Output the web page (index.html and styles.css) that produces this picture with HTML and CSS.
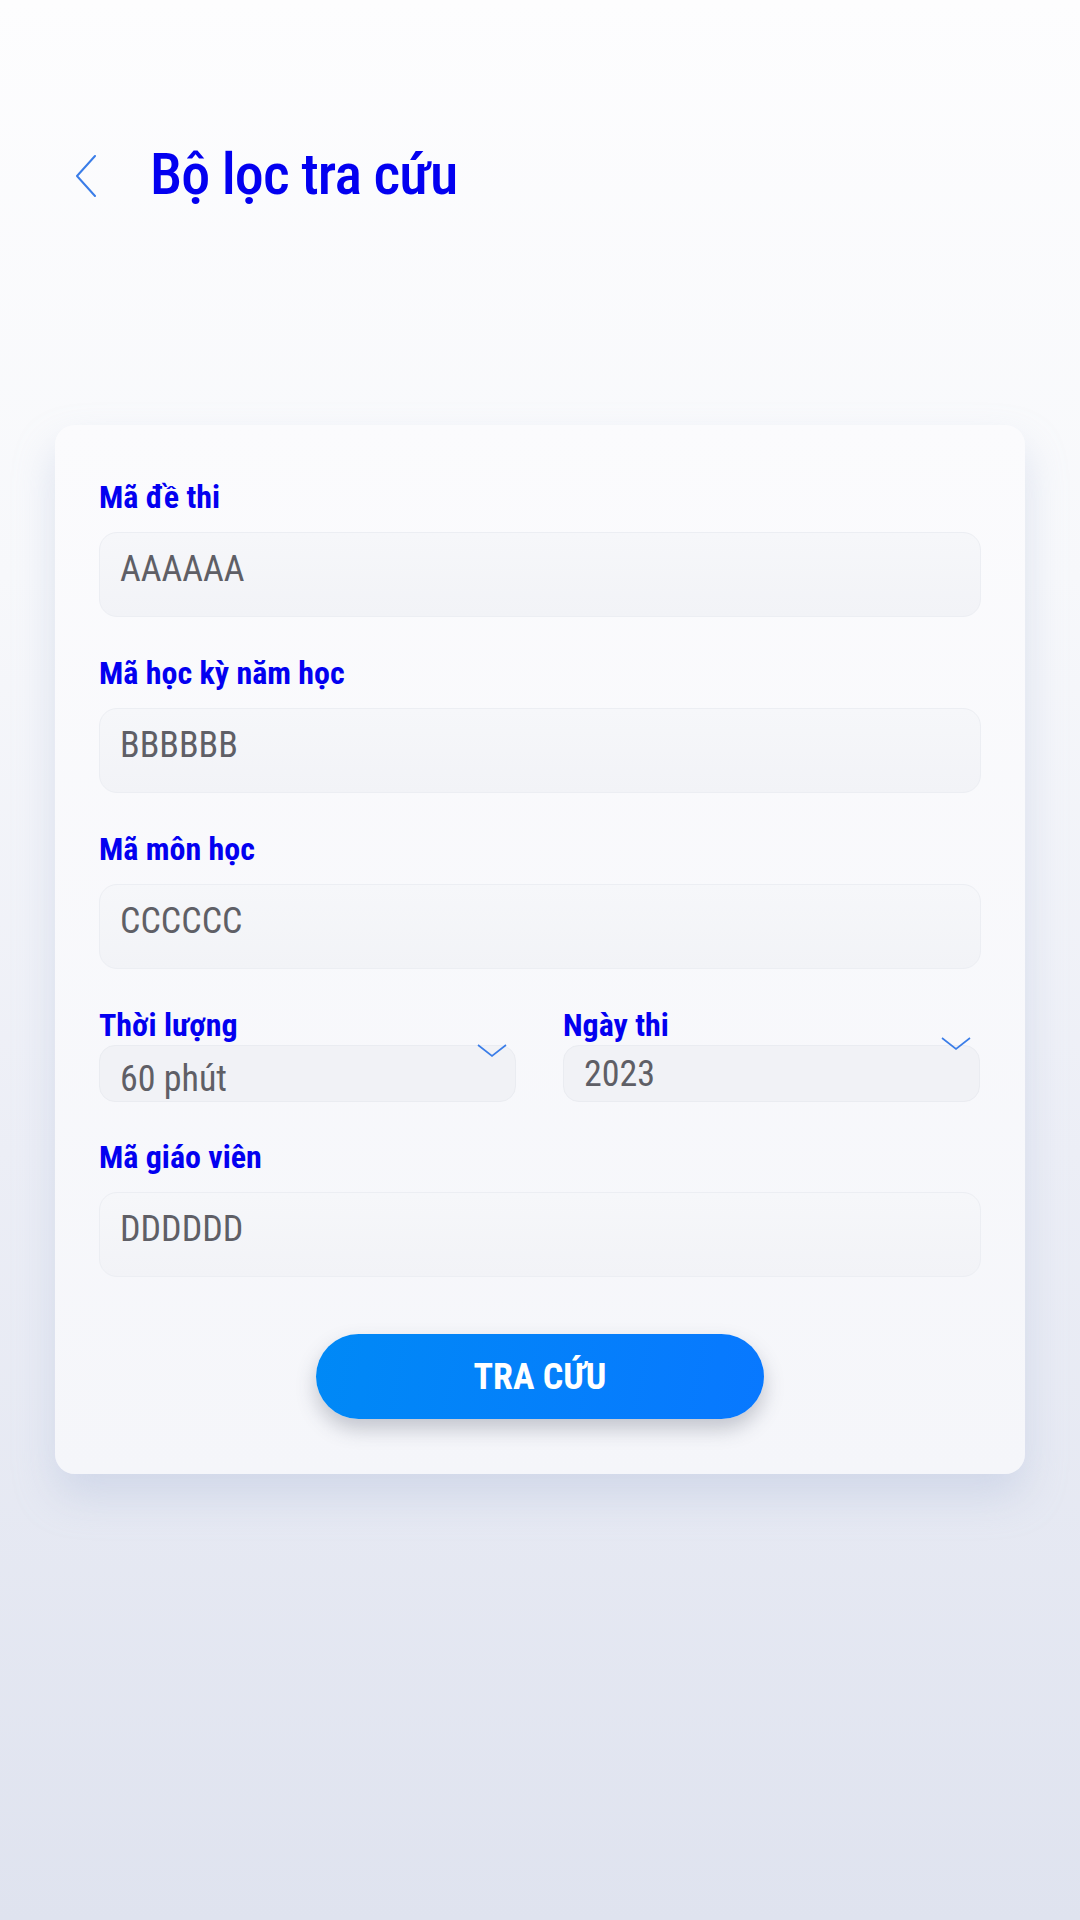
FILE: index.html
```html
<!DOCTYPE html>
<html lang="vi">
<head>
<meta charset="utf-8">
<title>Bộ lọc tra cứu</title>
<link rel="stylesheet" href="styles.css">
</head>
<body>
<div class="screen">
  <header class="header">
    <button class="back" aria-label="Quay lại">
      <svg width="22" height="42" viewBox="0 0 22 42"><path d="M20 1 L2 21 L20 41" fill="none" stroke="#3a7de8" stroke-width="2" stroke-linecap="round" stroke-linejoin="round"/></svg>
    </button>
    <h1 class="title"><span class="cond">Bộ lọc tra cứu</span></h1>
  </header>

  <main class="card">
    <div class="field">
      <label class="label"><span class="cond">Mã đề thi</span></label>
      <div class="input"><span class="cond">AAAAAA</span></div>
    </div>
    <div class="field">
      <label class="label"><span class="cond">Mã học kỳ năm học</span></label>
      <div class="input"><span class="cond">BBBBBB</span></div>
    </div>
    <div class="field">
      <label class="label"><span class="cond">Mã môn học</span></label>
      <div class="input"><span class="cond">CCCCCC</span></div>
    </div>
    <div class="row">
      <div class="col">
        <label class="label"><span class="cond">Thời lượng</span></label>
        <div class="select sel-left">
          <span class="cond">60 phút</span>
          <svg class="chev chev-left" width="30" height="13" viewBox="0 0 30 13"><path d="M1 1 L15 12 L29 1" fill="none" stroke="#3a7de8" stroke-width="1.6"/></svg>
        </div>
      </div>
      <div class="col">
        <label class="label"><span class="cond">Ngày thi</span></label>
        <div class="select sel-right">
          <span class="cond">2023</span>
          <svg class="chev chev-right" width="30" height="13" viewBox="0 0 30 13"><path d="M1 1 L15 12 L29 1" fill="none" stroke="#3a7de8" stroke-width="1.6"/></svg>
        </div>
      </div>
    </div>
    <div class="field last">
      <label class="label"><span class="cond">Mã giáo viên</span></label>
      <div class="input"><span class="cond">DDDDDD</span></div>
    </div>
    <div class="actions">
      <button class="btn"><span class="cond">TRA CỨU</span></button>
    </div>
  </main>
</div>
</body>
</html>
```

FILE: styles.css
```css
* { box-sizing: border-box; }
html, body { margin: 0; padding: 0; }
body {
  width: 1080px;
  height: 1920px;
  font-family: Roboto, "Noto Sans", sans-serif;
  background: linear-gradient(180deg, #fdfdfe 0%, #f7f8fb 30%, #eceef6 60%, #dfe3ef 100%);
  overflow: hidden;
}
.screen { width: 1080px; height: 1920px; }

.cond {
  display: inline-block;
  font-stretch: 75%;
}

.header {
  display: flex;
  padding: 139px 0 0 75px;
  height: 425px;
  align-items: flex-start;
}
.back {
  border: 0;
  background: none;
  padding: 0;
  margin: 16px 0 0 0;
  width: 22px;
  height: 42px;
  cursor: pointer;
}
.title {
  margin: 0 0 0 53px;
  font-size: 58px;
  line-height: 70px;
  font-weight: 500;
  letter-spacing: -0.9px;
  color: #0300f0;
}

.card {
  margin: 0 55px;
  width: 970px;
  height: 1049px;
  border-radius: 20px;
  background: linear-gradient(180deg, #fbfbfd 0%, #f5f6fa 100%);
  box-shadow: 0 22px 40px rgba(170, 182, 215, 0.35);
  padding: 52px 44px 0 44px;
}

.field { margin-bottom: 36px; }
.field.last { margin-bottom: 0; }

.label {
  display: block;
  font-size: 32px;
  line-height: 40px;
  font-weight: 700;
  color: #0300f0;
}

.input {
  margin-top: 15px;
  height: 85px;
  border-radius: 18px;
  background: linear-gradient(180deg, #f6f7fa 0%, #f2f3f7 100%);
  border: 1px solid #eceef3;
  padding: 12px 20px 0;
  font-size: 36px;
  line-height: 48px;
  color: #5f5f66;
}

.row {
  display: grid;
  grid-template-columns: 417px 417px;
  column-gap: 47px;
  margin-bottom: 35px;
}
.select {
  position: relative;
  height: 57px;
  border-radius: 16px;
  background: #f1f2f6;
  border: 1px solid #eaecf1;
  font-size: 36px;
  line-height: 48px;
  color: #5f5f66;
  padding-left: 20px;
}
.sel-left { padding-top: 9px; }
.sel-right { padding-top: 4px; }
.chev { position: absolute; }
.chev-left { right: 8px; top: -2px; }
.chev-right { right: 8px; top: -9px; }

.actions {
  display: flex;
  justify-content: center;
  margin-top: 57px;
}
.btn {
  width: 448px;
  height: 85px;
  border: 0;
  border-radius: 43px;
  background: linear-gradient(100deg, #0089f6 0%, #0878ff 100%);
  box-shadow: 0 10px 20px rgba(60, 70, 90, 0.28);
  color: #ffffff;
  font-family: Roboto, "Noto Sans", sans-serif;
  font-size: 36px;
  font-weight: 700;
  cursor: pointer;
  padding: 0;
}
```
